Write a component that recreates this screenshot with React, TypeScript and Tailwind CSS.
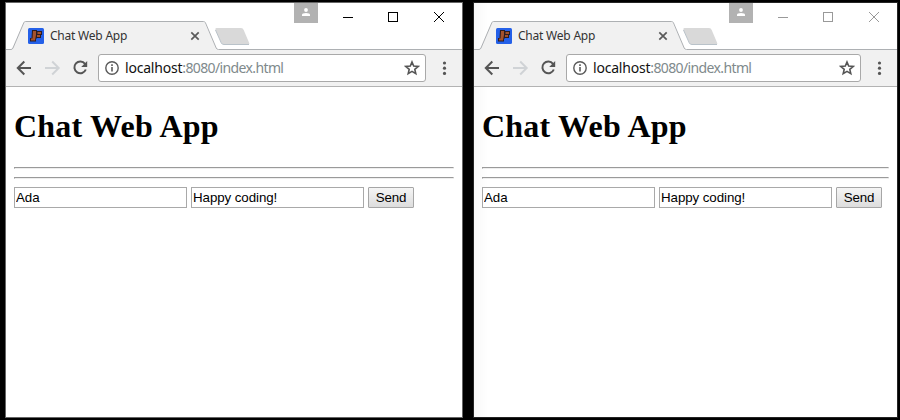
import React from "react";

const UI_FONT = "font-['Noto_Sans','Open_Sans',sans-serif]";

function Favicon() {
  return (
    <svg width="16" height="16" viewBox="0 0 16 16" className="shrink-0">
      <rect width="16" height="16" rx="1.5" fill="#2460e8" />
      <path d="M4 2H9V3H14V7H13V10H9V10.500H8V13.500H2V10H3.500Z" fill="#2b1c22" />
      <path d="M5 3H8V7L7 12.500H3V10.500H4.500Z" fill="#a5522b" />
      <path d="M9.500 4H13V6H9.500ZM9 7H12V9H9Z" fill="#a5522b" />
    </svg>
  );
}

function TabStrip({ active }: { active: boolean }) {
  const stroke = active ? "#000000" : "#999999";
  return (
    <div className="flex h-[47px] justify-between">
      <div className="relative flex h-[47px] w-[250px] shrink-0">
        <svg className="absolute left-0 top-0" width="250" height="47" viewBox="0 0 250 47">
          <path d="M0 47V46.500H5.500L18.500 18.500H198L211 46.500V47Z" fill="#f1f1f1" />
          <path d="M0 46.500H5Q6.300 46.500 7 45L17.800 19.700Q18.400 18.500 19.500 18.500H197.500Q198.800 18.500 199.400 19.700L210.200 45Q210.900 46.500 212.500 46.500H250" fill="none" stroke="#adb0b3" />
          <path d="M210.500 25H235Q237 25 237.700 27L243 39.500Q244 41.500 242 41.500H218Q216 41.500 215.300 39.500L209.500 27Q208.800 25 210.500 25Z" fill="#d9d9d9" />
          <path d="M209.500 27L215.300 40Q216 41.500 218 41.500H243" fill="none" stroke="#b9c2c9" />
        </svg>
        <div className="relative mt-[25px] flex h-4 w-full items-center pl-[22px]">
          <Favicon />
          <span className={`ml-[6px] w-[134px] whitespace-nowrap text-[12px] leading-4 tracking-[-0.22px] text-[#333] ${UI_FONT}`}>
            Chat Web App
          </span>
          <svg width="12" height="12" viewBox="0 0 12 12" className="ml-[5px]">
            <path d="M2.300 2.300L9.700 9.700M9.700 2.300L2.300 9.700" stroke="#5a5a5a" strokeWidth="1.7" />
          </svg>
        </div>
      </div>
      <div className="flex grow justify-end border-b border-[#adb0b3]">
        <div className="mr-[24px] flex h-5 w-6 shrink-0 justify-center bg-[#b2b2b2] pt-[5px]">
          <svg width="8" height="8" viewBox="0 0 8 8">
            <circle cx="4" cy="2" r="1.900" fill="#fff" />
            <path d="M0 8V6.800Q0 5 4 5T8 6.800V8Z" fill="#fff" />
          </svg>
        </div>
        <svg width="120" height="28" viewBox="0 0 120 28" className="shrink-0" fill="none" stroke={stroke}>
          <path d="M1 14.500H11" shapeRendering="crispEdges" />
          <rect x="46.500" y="9.500" width="9" height="9" shapeRendering="crispEdges" />
          <path d="M92 9L102 19M102 9L92 19" />
        </svg>
      </div>
    </div>
  );
}

function Toolbar() {
  return (
    <div className="flex h-[37px] items-center border-b border-[#b3b3b3] bg-[#f1f1f1] pl-[10px]">
      <svg width="82" height="28" viewBox="0 0 82 28" fill="none" strokeWidth="2" className="shrink-0">
        <path d="M15 14H2.500M8.300 7.500L1.800 14L8.300 20.500" stroke="#555" />
        <path d="M29 14H42M36.200 7.500L42.700 14L36.200 20.500" stroke="#d0d3d6" />
        <path d="M69 9.800A5.900 5.900 0 1 0 69.800 15.500" stroke="#555" />
        <path d="M71.200 7V13H65.200Z" fill="#555" />
      </svg>
      <div className="flex h-7 grow items-center rounded-[3px] border border-[#a9a9a9] bg-white pl-[6px] pr-[5px]">
        <svg width="14" height="14" viewBox="0 0 14 14" fill="none" className="shrink-0">
          <circle cx="7" cy="7" r="6.200" stroke="#5a5a5a" strokeWidth="1.400" />
          <path d="M7 6V10.500M7 3.300V5" stroke="#5a5a5a" strokeWidth="1.600" />
        </svg>
        <span className={`ml-[6px] grow whitespace-nowrap text-[14px] leading-5 tracking-[-0.63px] text-[#808a8c] ${UI_FONT}`}>
          <span className="tracking-[-0.2px] text-[#111]">localhost</span>:8080/index.html
        </span>
        <svg width="16" height="16" viewBox="0 0 16 16" fill="none" className="shrink-0">
          <path d="M8 2L9.700 6.100L14.100 6.500L10.800 9.400L11.800 13.700L8 11.400L4.200 13.700L5.200 9.400L1.900 6.500L6.300 6.100Z" stroke="#555" strokeWidth="1.600" />
        </svg>
      </div>
      <svg width="36" height="28" viewBox="0 0 36 28" fill="#555" className="shrink-0">
        <circle cx="18.500" cy="9" r="1.600" />
        <circle cx="18.500" cy="14.200" r="1.600" />
        <circle cx="18.500" cy="19.400" r="1.600" />
      </svg>
    </div>
  );
}

function Rule() {
  return <div className="h-[2px] border border-b-[#eee] border-l-[#9a9a9a] border-r-[#eee] border-t-[#9a9a9a]" />;
}

const FIELD =
  "h-[21px] w-[173px] border border-[#a9a9a9] bg-white px-px text-[13.333px] tracking-[-0.08px] text-black outline-none font-['Liberation_Sans',Arial,sans-serif]";

function ChatPage() {
  return (
    <div className="px-2">
      <h1 className="pt-[21px] font-['Liberation_Serif','Times_New_Roman',serif] text-[32px] font-bold leading-[37px] tracking-[0.22px] text-black">
        Chat Web App
      </h1>
      <div className="mt-[22px] flex flex-col gap-2">
        <Rule />
        <Rule />
        <div className="flex gap-1">
          <input className={FIELD} defaultValue="Ada" />
          <input className={FIELD} defaultValue="Happy coding!" />
          <button className="h-[21px] w-[46px] rounded-[1px] border border-[#a6a6a6] bg-linear-to-b from-[#f5f5f5] to-[#dddddd] font-['Liberation_Sans',Arial,sans-serif] text-[13.333px] leading-[19px] tracking-[-0.1px] text-black">
            Send
          </button>
        </div>
      </div>
    </div>
  );
}

function BrowserWindow({ active, className }: { active: boolean; className: string }) {
  return (
    <div className={`h-[416px] shrink-0 border bg-white ${className}`}>
      <TabStrip active={active} />
      <Toolbar />
      <ChatPage />
    </div>
  );
}

export default function App() {
  return (
    <div className="flex h-[420px] w-[900px] gap-[10px] overflow-hidden bg-black pl-[5px] pt-[2px]">
      <BrowserWindow active className="w-[458px] border-[#666]" />
      <BrowserWindow active={false} className="w-[425px] border-[#252525] bg-linear-to-r from-[#f8f8f8] to-white to-[14px]" />
    </div>
  );
}
